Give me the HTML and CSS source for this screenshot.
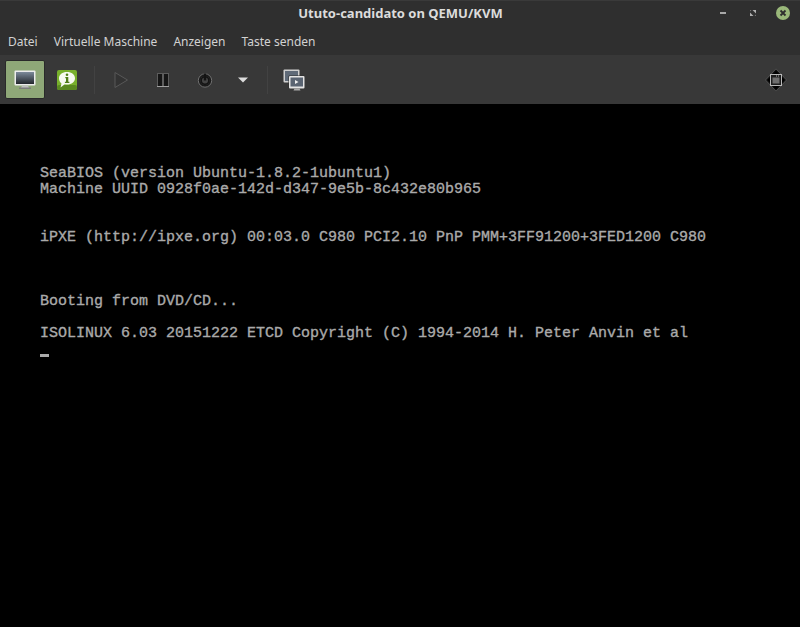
FILE: index.html
```html
<!DOCTYPE html>
<html lang="de">
<head>
<meta charset="utf-8">
<title>Ututo-candidato on QEMU/KVM</title>
<link rel="stylesheet" href="styles.css">
</head>
<body>
<div class="window">
  <header class="titlebar">
    <span class="title">Ututo-candidato on QEMU/KVM</span>
    <span class="wm-min"></span>
    <svg class="wm-max" width="6" height="6" viewBox="0 0 6 6"><path d="M2.500 0H6v3.500z" fill="#b0b0b0"/><path d="M0 2.500L3.500 6H0z" fill="#b0b0b0"/><path d="M0 0h1.500L0 1.500zM6 6H4.500L6 4.500z" fill="#777"/></svg>
    <svg class="wm-close" width="14" height="14" viewBox="0 0 14 14"><circle cx="7" cy="7" r="7" fill="#9ab87a"/><path d="M4.500 4.500l5 5M9.500 4.500l-5 5" stroke="#2e2e2e" stroke-width="1.800"/></svg>
  </header>
  <nav class="menubar">
    <span>Datei</span><span>Virtuelle Maschine</span><span>Anzeigen</span><span>Taste senden</span>
  </nav>
  <div class="toolbar">
    <button class="tool active">
      <svg width="22" height="20" viewBox="0 0 22 20"><defs><linearGradient id="scr" x1="0" y1="0" x2="0" y2="1"><stop offset="0" stop-color="#7c8a9a"/><stop offset="1" stop-color="#23272d"/></linearGradient></defs><rect x="0.500" y="0.500" width="21" height="15" rx="1" fill="#ececec"/><rect x="2" y="2" width="18" height="12" fill="url(#scr)"/><path d="M8 15.500h6l1 2.500H7z" fill="#c0c0c0"/><rect x="5" y="17.500" width="12" height="1.500" fill="#7d7d7d"/></svg>
    </button>
    <button class="tool info">
      <svg width="22" height="22" viewBox="0 0 22 22"><rect x="1" y="1" width="20" height="20" rx="2" fill="#78b02c"/><rect x="1" y="16" width="20" height="5" rx="2" fill="#5a8a20"/><path d="M11 3c4.700 0 8 2.700 8 6.300s-3.300 6.300-8 6.300c-.8 0-1.500-.1-2.200-.3L4.500 18.500l1-4C4 13.300 3 11.500 3 9.300 3 5.700 6.300 3 11 3z" fill="#f6faf0"/><circle cx="11" cy="5.800" r="1.300" fill="#4f7d18"/><path d="M9.300 8h3v4.800h1.100v1.200H8.900v-1.200H10V9.200h-.7z" fill="#4f7d18"/></svg>
    </button>
    <span class="sep first"></span>
    <button class="tool">
      <svg width="16" height="18" viewBox="0 0 16 18"><path d="M2 1.500L14.500 9 2 16.500z" fill="#333" stroke="#585858" stroke-width="1"/></svg>
    </button>
    <button class="tool">
      <svg width="12" height="14" viewBox="0 0 12 14"><rect x="0.500" y="0.500" width="5" height="13" fill="#151515" stroke="#5c5c5c"/><rect x="6.500" y="0.500" width="5" height="13" fill="#151515" stroke="#5c5c5c"/><path d="M0 13.500h6M6 13.500h6" stroke="#a0a0a0"/></svg>
    </button>
    <button class="tool">
      <svg width="16" height="16" viewBox="0 0 16 16"><circle cx="8" cy="8.500" r="6.700" fill="#1a1a1a" stroke="#707070" stroke-width="1"/><circle cx="8" cy="8.500" r="4.500" fill="#444"/><circle cx="8" cy="8.500" r="3.800" fill="none" stroke="#141414" stroke-width="1.500"/><rect x="6.800" y="1.500" width="2.400" height="7" fill="#141414"/></svg>
    </button>
    <button class="tool caret">
      <svg width="12" height="8" viewBox="0 0 12 8"><path d="M1 1.500h10L6 6.500z" fill="#dcdcdc"/></svg>
    </button>
    <span class="sep second"></span>
    <button class="tool">
      <svg width="22" height="22" viewBox="0 0 22 22"><rect x="0.500" y="0.500" width="16" height="13" rx="1" fill="#cfcfcf"/><rect x="2" y="2" width="13" height="10" fill="#5f6a78"/><rect x="5.500" y="6.500" width="16" height="13" rx="1" fill="#2e2e2e"/><rect x="6" y="7" width="15.500" height="12.500" rx="1" fill="#e4e4e4"/><rect x="7.500" y="8.500" width="12.500" height="9" fill="#5a6472"/><path d="M12 11l3.500 2-3.500 2z" fill="#eee"/><path d="M11.500 19.500h5l1 2h-7z" fill="#a8a8a8"/></svg>
    </button>
    <span class="grow"></span>
    <button class="tool">
      <svg width="22" height="24" viewBox="0 0 22 24"><path d="M11 .8L21.500 12 11 23.200.5 12z" fill="#141414" stroke="#5a5a5a" stroke-width=".8"/><path d="M11 2.500L14 6H8zM11 21.500L8 18h6zM2.300 12L5 9v6zM19.700 12L17 15V9z" fill="#000"/><rect x="5.500" y="6.500" width="11" height="11" fill="#1e1e1e" stroke="#b8b8b8"/><rect x="7.500" y="9.500" width="7" height="6" fill="#6e6e6e"/><path d="M11 8h1M13 8h1" stroke="#aaa" stroke-width="1"/></svg>
    </button>
  </div>
  <pre class="screen">SeaBIOS (version Ubuntu-1.8.2-1ubuntu1)
Machine UUID 0928f0ae-142d-d347-9e5b-8c432e80b965


iPXE (http://ipxe.org) 00:03.0 C980 PCI2.10 PnP PMM+3FF91200+3FED1200 C980



Booting from DVD/CD...

ISOLINUX 6.03 20151222 ETCD Copyright (C) 1994-2014 H. Peter Anvin et al
<span class="cursor"></span></pre>
</div>
</body>
</html>
```
FILE: styles.css
```css
* { box-sizing: border-box; }
html, body { margin: 0; padding: 0; height: 100%; background: #000; }
.window { width: 800px; height: 627px; display: flex; flex-direction: column; overflow: hidden; font-family: "Noto Sans", sans-serif; }
.titlebar { position: relative; height: 32px; flex: none; display: flex; align-items: center; background: #2f2f2f; border-top: 1px solid #3a3a3a; padding: 0 10px 7px 0; }
.title { flex: 1; padding-left: 105px; text-align: center; font-size: 13px; font-weight: 700; color: #dcdcdc; line-height: 24px; }
.wm-min { width: 6px; height: 2px; background: #a8a8a8; margin-left: 24px; }
.wm-max { margin-left: 24px; }
.wm-close { margin-left: 20px; }
.menubar { height: 23px; flex: none; display: flex; align-items: center; gap: 16px; padding: 0 8px 4px; background: #2f2f2f; color: #d2d2d2; font-size: 12px; }
.toolbar { height: 49px; flex: none; display: flex; align-items: center; padding: 0 3px 0 5px; background: #383838; }
.tool { width: 42px; height: 38px; padding: 0; border: 0; border-radius: 2px; background: none; display: flex; align-items: center; justify-content: center; }
.tool.active { width: 40px; height: 39px; background: #8fa878; border: 1px solid #2a2a2a; }
.tool.info { width: 44px; }
.tool.caret { width: 34px; }
.sep { width: 1px; height: 28px; background: #424242; }
.sep.first { margin: 0 5px; }
.sep.second { margin: 0 5px 0 7px; }
.grow { flex: 1; }
.screen { flex: 1; margin: 0; padding: 62px 0 0 40px; background: #000; color: #aaa; font-family: "Liberation Mono", monospace; font-size: 15px; line-height: 16px; white-space: pre; -webkit-text-stroke: 0.35px #aaa; }
.cursor { display: inline-block; width: 9px; height: 3px; margin-top: 12px; background: #aaa; vertical-align: top; }
```
